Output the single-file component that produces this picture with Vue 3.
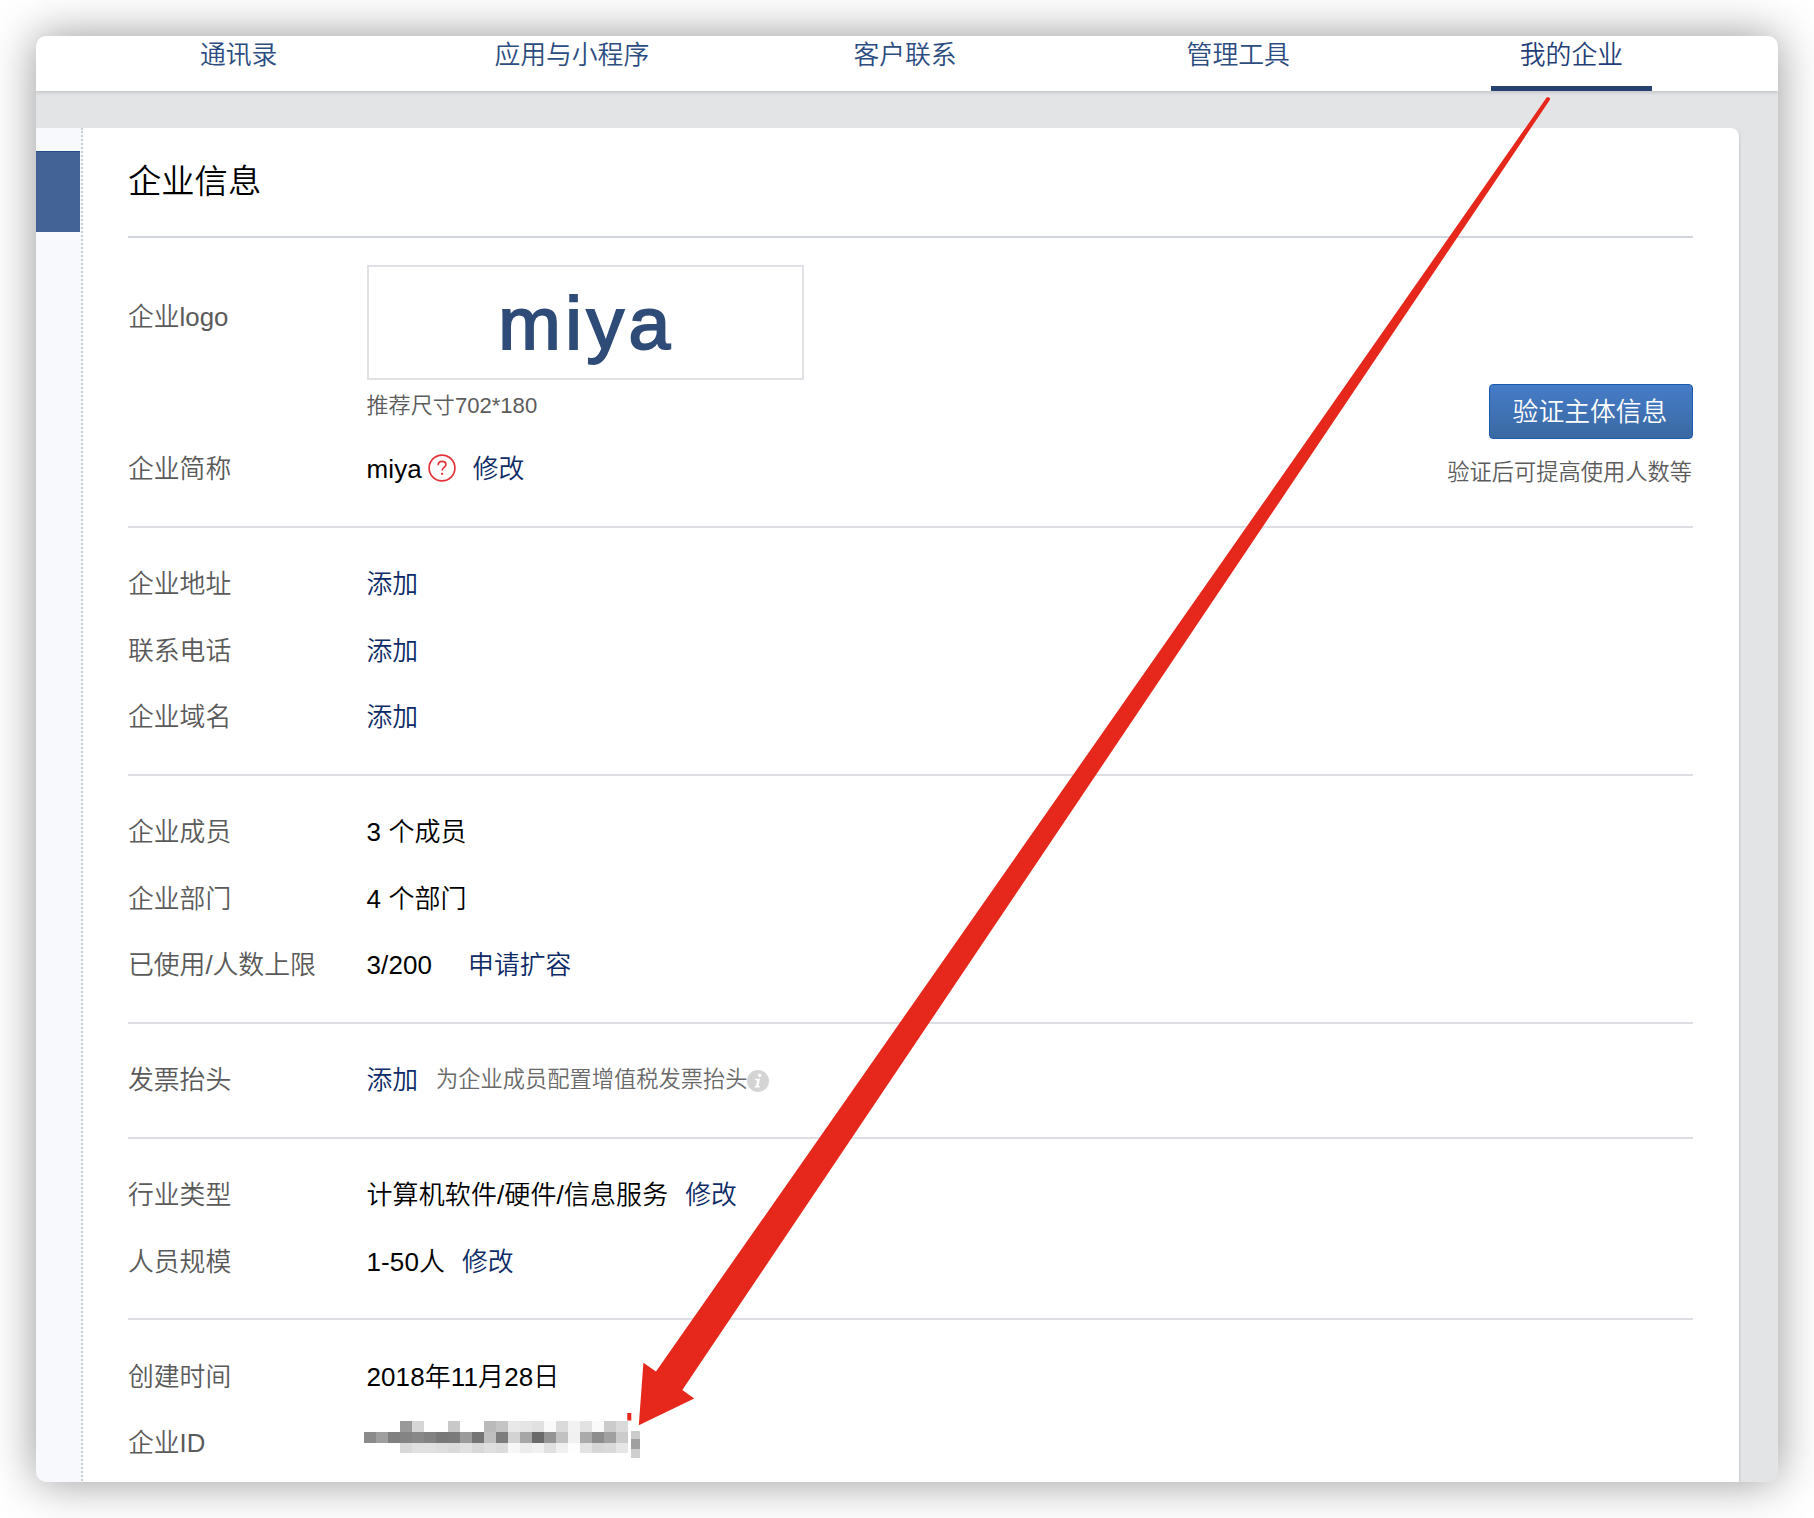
<script setup>
const navItems = ['通讯录', '应用与小程序', '客户联系', '管理工具', '我的企业']
const activeNav = '我的企业'

const sections = [
  [
    { label: '企业地址', action: '添加' },
    { label: '联系电话', action: '添加' },
    { label: '企业域名', action: '添加' },
  ],
  [
    { label: '企业成员', value: '3 个成员' },
    { label: '企业部门', value: '4 个部门' },
    { label: '已使用/人数上限', value: '3/200', action: '申请扩容', wide: true },
  ],
  [{ label: '发票抬头', action: '添加', note: '为企业成员配置增值税发票抬头' }],
  [
    { label: '行业类型', value: '计算机软件/硬件/信息服务', action: '修改' },
    { label: '人员规模', value: '1-50人', action: '修改' },
  ],
  [
    { label: '创建时间', value: '2018年11月28日' },
    { label: '企业ID', masked: true },
  ],
]

// Grey levels of the pixelated company ID, one string of hex pairs per row
const maskRows = [
  { y: 0, h: 11, tones: 'ffffff99d6ffffc8ffffbac4e8e5e1fadaf2e2facbda' },
  { y: 11, h: 11, tones: '8b9f80848882787a9b74bf7dd3a66a94c1f1aa8da0cb' },
  { y: 22, h: 10, tones: 'ffffffd9e0e0dddae1d9dfdcf7ecf1e0f0fde3d7dae6' },
]
const maskCells = maskRows.flatMap(({ y, h, tones }) =>
  tones.match(/../g).map((t, i) => ({ x: i * 12, y, h, fill: `#${t}${t}${t}` })),
)
</script>

<template>
  <div class="window">
    <nav class="nav">
      <a v-for="item in navItems" :key="item" class="nav-item" :class="{ active: item === activeNav }">
        <span>{{ item }}</span>
      </a>
    </nav>
    <div class="body">
      <aside class="sidebar"><div class="sidebar-active"></div></aside>
      <main class="card">
        <h1 class="title">企业信息</h1>
        <section class="intro">
          <div class="intro-main">
            <div class="logo-row">
              <span class="label">企业logo</span>
              <div>
                <div class="logo-box"><span class="logo-text">miya</span></div>
                <p class="hint">推荐尺寸702*180</p>
              </div>
            </div>
            <div class="row name-row">
              <span class="label">企业简称</span>
              <span class="value">miya</span>
              <svg class="help" width="28" height="28" viewBox="0 0 28 28" fill="none" stroke="#e3353a" stroke-width="1.7">
                <circle cx="14" cy="14" r="12.9" />
                <path d="M10.2 11.2C10.2 8.7 11.8 7.4 14.1 7.4C16.3 7.4 17.9 8.7 17.9 10.7C17.9 13.4 14.1 13.5 14.1 16.6" />
                <path d="M14.1 18.8V20.8" stroke-width="2" />
              </svg>
              <a class="link">修改</a>
            </div>
          </div>
          <div class="verify">
            <button class="verify-btn">验证主体信息</button>
            <p class="verify-note">验证后可提高使用人数等</p>
          </div>
        </section>
        <section v-for="(rows, s) in sections" :key="s" class="section">
          <div v-for="row in rows" :key="row.label" class="row">
            <span class="label">{{ row.label }}</span>
            <span v-if="row.value" class="value" :class="{ spaced: row.action, wide: row.wide }">{{ row.value }}</span>
            <a v-if="row.action" class="link">{{ row.action }}</a>
            <span v-if="row.note" class="note">{{ row.note }}</span>
            <svg v-if="row.note" class="info" width="22" height="22" viewBox="0 0 22 22">
              <circle cx="11" cy="11" r="11" fill="#d4d4d4" />
              <circle cx="12.6" cy="5.4" r="1.8" fill="#fff" />
              <path d="M8.2 8.8H13L11.4 16H12.9L12.5 17.4H7.6L8 16H9L10.2 10.2H7.9Z" fill="#fff" />
            </svg>
            <svg v-if="row.masked" class="mask" width="277" height="38" viewBox="0 0 277 38" shape-rendering="crispEdges">
              <rect v-for="(c, i) in maskCells" :key="i" :x="c.x" :y="c.y" width="12" :height="c.h" :fill="c.fill" />
              <rect x="267" y="10" width="9" height="8" fill="#cbcbcb" />
              <rect x="267" y="18" width="9" height="10" fill="#a0a0a0" />
              <rect x="267" y="28" width="9" height="9" fill="#cfcfcf" />
            </svg>
          </div>
        </section>
      </main>
    </div>
    <svg class="arrow" width="1742" height="1446" viewBox="36 36 1742 1446" fill="#e6281c">
      <path d="M1546.6 97.6L1548.2 97L1550.2 98.6L1549.8 100L682.3 1390L694.2 1398.5L638.8 1425.2L643.4 1362.7L656 1371.5Z" />
      <rect x="627.3" y="1413" width="4" height="7.5" />
    </svg>
  </div>
</template>

<style>
body {
  margin: 0;
  background: #fff;
}
</style>

<style scoped>
.window {
  position: relative;
  box-sizing: border-box;
  display: flex;
  flex-direction: column;
  width: 1742px;
  height: 1446px;
  margin: 36px;
  border-radius: 10px;
  overflow: hidden;
  background: #e3e4e6;
  font-family: "Liberation Sans", "Noto Sans CJK SC", sans-serif;
  font-size: 25.8px;
  font-weight: 350;
  color: #000;
  box-shadow: 0 0 46px rgba(0, 0, 0, 0.42);
}
.nav {
  display: flex;
  flex: none;
  height: 55px;
  padding: 0 40px 0 36px;
  background: #fff;
  box-shadow: 0 2px 3px #c6c8ca;
}
.nav-item {
  flex: 1;
  display: flex;
  justify-content: center;
  color: #2c4d80;
}
.nav-item span {
  box-sizing: border-box;
  height: 55px;
  line-height: 39px;
  white-space: nowrap;
}
.nav-item.active span {
  width: 161px;
  text-align: center;
  color: #1f3f76;
  border-bottom: 5px solid #264273;
}
.body {
  flex: 1;
  display: flex;
  padding: 37px 39px 0 0;
}
.sidebar {
  box-sizing: border-box;
  width: 47px;
  padding: 23px 1px 0 0;
  background: #f7f9fd;
  border-right: 2px dotted #c9ced8;
}
.sidebar-active {
  box-sizing: border-box;
  height: 81px;
  background: #436296;
  border-top: 1px solid #264f88;
}
.card {
  flex: 1;
  padding: 0 46px 0 45px;
  background: #fff;
  border-top-right-radius: 8px;
  box-shadow: 1px 1px 2px rgba(0, 0, 0, 0.12);
}
.title {
  box-sizing: border-box;
  height: 109.5px;
  margin: 0;
  border-bottom: 2px solid #d0d4dc;
  font-size: 33.3px;
  font-weight: inherit;
  line-height: 107px;
}
.intro {
  display: flex;
  justify-content: space-between;
  height: 288.5px;
}
.logo-row {
  display: flex;
  height: 198.5px;
  padding-top: 27.5px;
  box-sizing: border-box;
}
.logo-row .label {
  line-height: 105px;
}
.logo-box {
  box-sizing: border-box;
  display: flex;
  align-items: center;
  justify-content: center;
  width: 437px;
  height: 115px;
  padding-top: 2px;
  border: 2px solid #dfe1e6;
}
.logo-text {
  margin-right: -3px;
  font-family: "Liberation Sans", sans-serif;
  font-size: 75px;
  line-height: 1;
  letter-spacing: 4.6px;
  color: #2f4b77;
  -webkit-text-stroke: 2px #2f4b77;
}
.hint {
  margin: 9px 0 0;
  font-size: 22.1px;
  line-height: 34px;
  color: #5c5c5c;
}
.label {
  flex: none;
  width: 238.5px;
  color: #5a5a5a;
}
.row {
  box-sizing: border-box;
  display: flex;
  align-items: center;
  height: 66.4px;
  padding-top: 1.2px;
  line-height: 36px;
  white-space: nowrap;
}
.name-row {
  padding-top: 0;
}
.help {
  margin: -2px 17px 0 6px;
}
.link {
  color: #0d2b66;
}
.value.spaced {
  margin-right: 17px;
}
.value {
  font-size: 26px;
  letter-spacing: 0.1px;
}
.value.wide {
  margin-right: 36px;
}
.verify {
  display: flex;
  flex-direction: column;
  align-items: flex-end;
  padding-top: 146px;
}
.verify-btn {
  width: 204px;
  height: 55px;
  padding: 0 2px 3px 0;
  border: 1px solid #1a5bb0;
  border-radius: 4px;
  background: linear-gradient(#467cc8, #3a69a2);
  color: #fff;
  font: inherit;
}
.verify-note {
  margin: 17px 1px 0 0;
  font-size: 22.25px;
  line-height: 34px;
  color: #5c5c5c;
}
.section {
  padding: 22.6px 0 24.1px;
  border-top: 2px solid #dcdee4;
}
.note {
  margin-left: 18px;
  font-size: 22.25px;
  color: #6a6a6a;
}
.info {
  margin: 2px 0 0 -1px;
}
.mask {
  margin: -7px 0 0 -2.5px;
}
.arrow {
  position: absolute;
  left: 0;
  top: 0;
  pointer-events: none;
}
</style>
